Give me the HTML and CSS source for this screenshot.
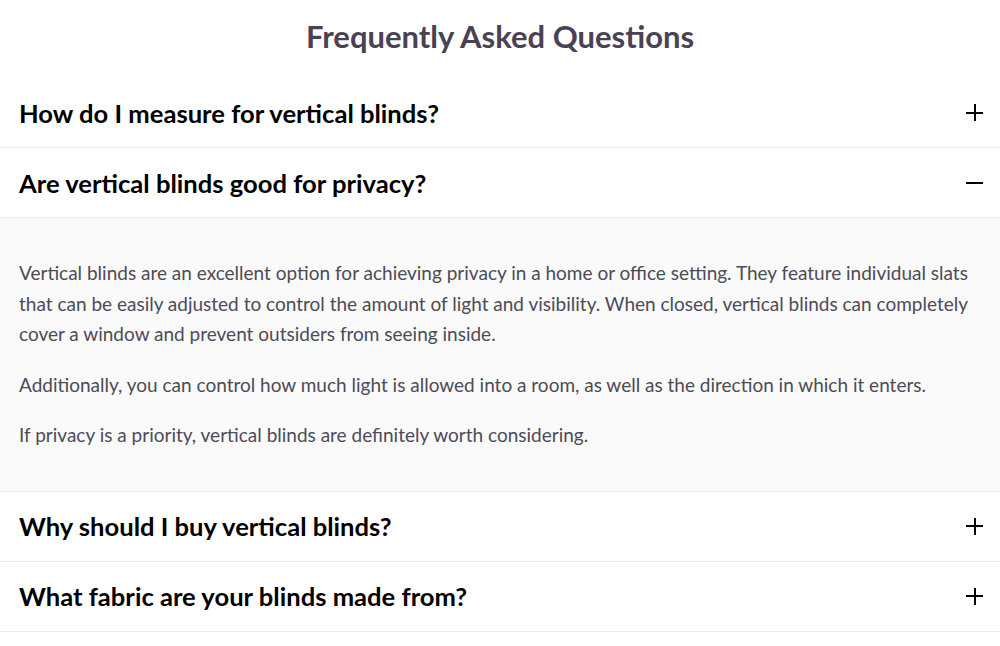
FILE: index.html
```html
<!DOCTYPE html>
<html lang="en">
<head>
<meta charset="utf-8">
<title>FAQ</title>
<link rel="stylesheet" href="styles.css">
</head>
<body>
<section class="faq">
  <h2 class="faq-title">Frequently Asked Questions</h2>
  <div class="faq-list">
    <div class="faq-item">
      <div class="faq-q">
        <span class="q-text">How do I measure for vertical blinds?</span>
        <span class="icon plus"></span>
      </div>
    </div>
    <div class="faq-item open">
      <div class="faq-q">
        <span class="q-text">Are vertical blinds good for privacy?</span>
        <span class="icon minus"></span>
      </div>
      <div class="faq-a">
        <p>Vertical blinds are an excellent option for achieving privacy in a home or office setting. They feature individual slats that can be easily adjusted to control the amount of light and visibility. When closed, vertical blinds can completely cover a window and prevent outsiders from seeing inside.</p>
        <p>Additionally, you can control how much light is allowed into a room, as well as the direction in which it enters.</p>
        <p>If privacy is a priority, vertical blinds are definitely worth considering.</p>
      </div>
    </div>
    <div class="faq-item">
      <div class="faq-q">
        <span class="q-text">Why should I buy vertical blinds?</span>
        <span class="icon plus"></span>
      </div>
    </div>
    <div class="faq-item">
      <div class="faq-q">
        <span class="q-text">What fabric are your blinds made from?</span>
        <span class="icon plus"></span>
      </div>
    </div>
  </div>
</section>
</body>
</html>
```

FILE: styles.css
```css
html, body {
  margin: 0;
  padding: 0;
  background: #ffffff;
}
body {
  font-family: "Lato", "Liberation Sans", sans-serif;
}
.faq-title {
  margin: 0;
  padding-top: 17px;
  height: 78px;
  box-sizing: border-box;
  text-align: center;
  font-size: 31px;
  line-height: 38px;
  font-weight: 700;
  color: #4a4252;
}
.faq-list {
  display: flex;
  flex-direction: column;
}
.faq-item {
  border-bottom: 1px solid #ececec;
}
.faq-q {
  display: flex;
  align-items: center;
  justify-content: space-between;
  height: 69px;
  padding: 0 17px 0 19px;
  background: #ffffff;
}
.q-text {
  font-size: 25.6px;
  font-weight: 700;
  color: #000000;
  line-height: 30px;
}
.icon {
  position: relative;
  width: 17px;
  height: 17px;
}
.icon::before,
.icon::after {
  content: "";
  position: absolute;
  background: #000;
}
.icon::before {
  left: 0;
  right: 0;
  top: 7.5px;
  height: 2px;
}
.plus::after {
  top: 0;
  bottom: 0;
  left: 7.5px;
  width: 2px;
}
.minus::after {
  display: none;
}
.faq-a {
  background: #fafafa;
  border-top: 1px solid #ececec;
  padding: 40px 20px 40px 19px;
  font-size: 19px;
  line-height: 30.5px;
  color: #4d4b57;
}
.faq-a p {
  margin: 0 0 20px;
}
.faq-a p:last-child {
  margin-bottom: 0;
}
```
